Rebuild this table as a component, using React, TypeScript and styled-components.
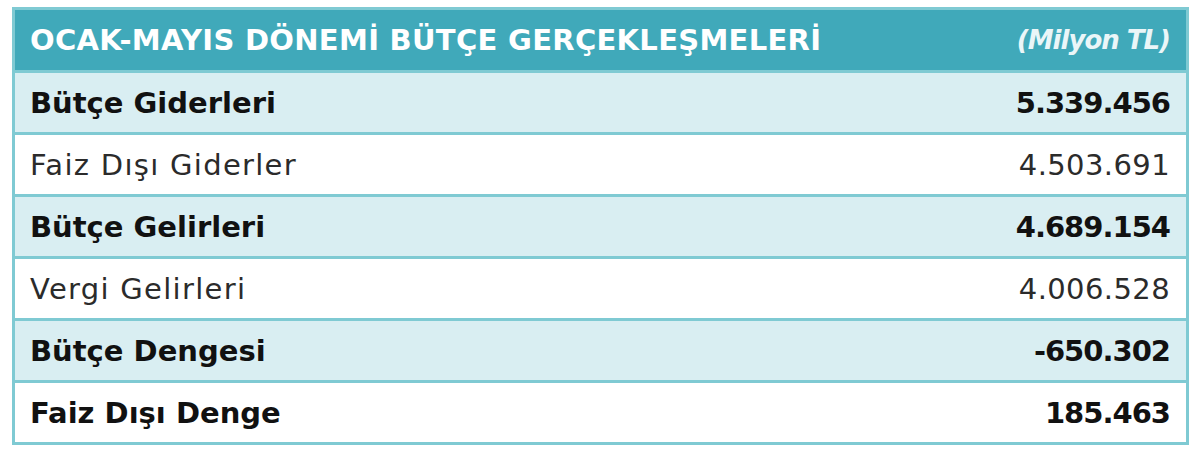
import React from 'react';
import styled, { createGlobalStyle } from 'styled-components';

const GlobalStyle = createGlobalStyle`
  html, body {
    margin: 0;
    padding: 0;
    background: #FFFFFF;
  }
  body {
    font-family: 'DejaVu Sans', 'Liberation Sans', sans-serif;
  }
`;

const Page = styled.div`
  width: 1200px;
  height: 454px;
  box-sizing: border-box;
  padding: 7px 11px 0 12px;
`;

const Table = styled.div`
  display: flex;
  flex-direction: column;
  border: 3px solid #7FCAD3;
  background: #FFFFFF;
`;

const HeaderRow = styled.div`
  display: flex;
  align-items: center;
  justify-content: space-between;
  height: 60px;
  padding: 0 16px 0 15px;
  background: #40A9BA;
  color: #FFFFFF;
  font-weight: 700;
`;

const Title = styled.span`
  font-size: 29px;
  letter-spacing: 0.3px;
`;

const Unit = styled.span`
  font-size: 26px;
  font-style: italic;
  letter-spacing: -1px;
  color: #EAF6F8;
`;

const Row = styled.div<{ $shaded: boolean; $bold: boolean }>`
  display: flex;
  align-items: center;
  justify-content: space-between;
  height: 59px;
  padding: 0 16px 0 15px;
  border-top: 3px solid #7FCAD3;
  background: ${p => (p.$shaded ? '#D9EEF2' : '#FFFFFF')};
  color: ${p => (p.$bold ? '#111111' : '#2B2B2B')};
  font-weight: ${p => (p.$bold ? 700 : 400)};
  font-size: 29px;
  letter-spacing: ${p => (p.$bold ? '0px' : '1.3px')};
`;

const Label = styled.span``;

const Value = styled.span<{ $bold: boolean }>`
  letter-spacing: ${p => (p.$bold ? '-1px' : '0.4px')};
`;

const rows = [
  { label: 'Bütçe Giderleri', value: '5.339.456', bold: true, shaded: true },
  { label: 'Faiz Dışı Giderler', value: '4.503.691', bold: false, shaded: false },
  { label: 'Bütçe Gelirleri', value: '4.689.154', bold: true, shaded: true },
  { label: 'Vergi Gelirleri', value: '4.006.528', bold: false, shaded: false },
  { label: 'Bütçe Dengesi', value: '-650.302', bold: true, shaded: true },
  { label: 'Faiz Dışı Denge', value: '185.463', bold: true, shaded: false },
];

export default function App() {
  return (
    <Page>
      <GlobalStyle />
      <Table>
        <HeaderRow>
          <Title>OCAK-MAYIS DÖNEMİ BÜTÇE GERÇEKLEŞMELERİ</Title>
          <Unit>(Milyon TL)</Unit>
        </HeaderRow>
        {rows.map(r => (
          <Row key={r.label} $shaded={r.shaded} $bold={r.bold}>
            <Label>{r.label}</Label>
            <Value $bold={r.bold}>{r.value}</Value>
          </Row>
        ))}
      </Table>
    </Page>
  );
}
